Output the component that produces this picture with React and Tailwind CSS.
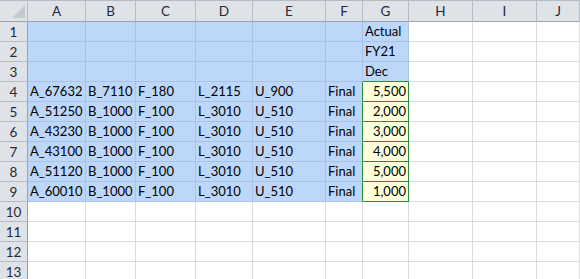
import React from "react";

const COLS = ["A", "B", "C", "D", "E", "F", "G", "H", "I", "J"];

const DATA = [
  ["", "", "", "", "", "", "Actual"],
  ["", "", "", "", "", "", "FY21"],
  ["", "", "", "", "", "", "Dec"],
  ["A_67632", "B_7110", "F_180", "L_2115", "U_900", "Final", "5,500"],
  ["A_51250", "B_1000", "F_100", "L_3010", "U_510", "Final", "2,000"],
  ["A_43230", "B_1000", "F_100", "L_3010", "U_510", "Final", "3,000"],
  ["A_43100", "B_1000", "F_100", "L_3010", "U_510", "Final", "4,000"],
  ["A_51120", "B_1000", "F_100", "L_3010", "U_510", "Final", "5,000"],
  ["A_60010", "B_1000", "F_100", "L_3010", "U_510", "Final", "1,000"],
];

const TOTAL_ROWS = 13;

function cellClass(r, c) {
  // r: 1-based row, c: 0-based col index (A=0)
  const blue = r <= 9 && (c <= 5 || (c === 6 && r <= 3));
  const yellow = c === 6 && r >= 4 && r <= 9;
  let cls = "flex items-end whitespace-nowrap border-r border-b pb-[2px] ";
  if (yellow) cls += "bg-[#ffffdd] border-[#2a8a3e] justify-end pr-[2px] ";
  else if (blue) cls += "bg-[#bdd7fb] border-[#a9c3e6] pl-[2px] ";
  else cls += "bg-white border-[#dadcdd] pl-[2px] ";
  // green edges adjoining the yellow block
  if (c === 5 && r >= 4 && r <= 9) cls += "border-r-[#2a8a3e] ";
  if (c === 6 && r === 3) cls += "border-b-[#2a8a3e] ";
  return cls;
}

function Corner() {
  return (
    <div className="relative border-t border-r border-b border-t-[#b5bcc4] border-r-[#b5bcc4] border-b-[#9aa3ad] bg-[#dfe3e8]">
      <svg width="27" height="21" className="absolute left-0 top-0">
        <polygon points="12,17 25,17 25,4" fill="#c3c9d1" />
      </svg>
    </div>
  );
}

export default function App() {
  return (
    <div
      className="h-[279px] w-[580px] overflow-hidden bg-white text-[13px] leading-[15px] text-black"
      style={{ fontFamily: "Lato, 'Liberation Sans', sans-serif" }}
    >
      <div className="grid grid-cols-[28px_58px_50px_60px_57px_73px_37px_46px_64px_64px_1fr] grid-rows-[22px] auto-rows-[20px]">
        <Corner />
        {COLS.map((col) => (
          <div
            key={col}
            className="flex items-center justify-center border-t border-r border-b border-t-[#b5bcc4] border-r-[#b5bcc4] border-b-[#9aa3ad] bg-[#dfe3e8] pt-[1px] text-[13.5px] text-[#1f2a3c]"
          >
            {col}
          </div>
        ))}
        {Array.from({ length: TOTAL_ROWS }, (_, i) => i + 1).map((r) => (
          <React.Fragment key={r}>
            <div className="flex items-center justify-center border-r border-b border-r-[#9aa3ad] border-b-[#b5bcc4] bg-[#dfe3e8] pt-[1px] text-[13.5px] text-[#1f2a3c]">
              {r}
            </div>
            {COLS.map((col, c) => (
              <div key={col} className={cellClass(r, c)}>
                {(DATA[r - 1] && DATA[r - 1][c]) || ""}
              </div>
            ))}
          </React.Fragment>
        ))}
      </div>
    </div>
  );
}
